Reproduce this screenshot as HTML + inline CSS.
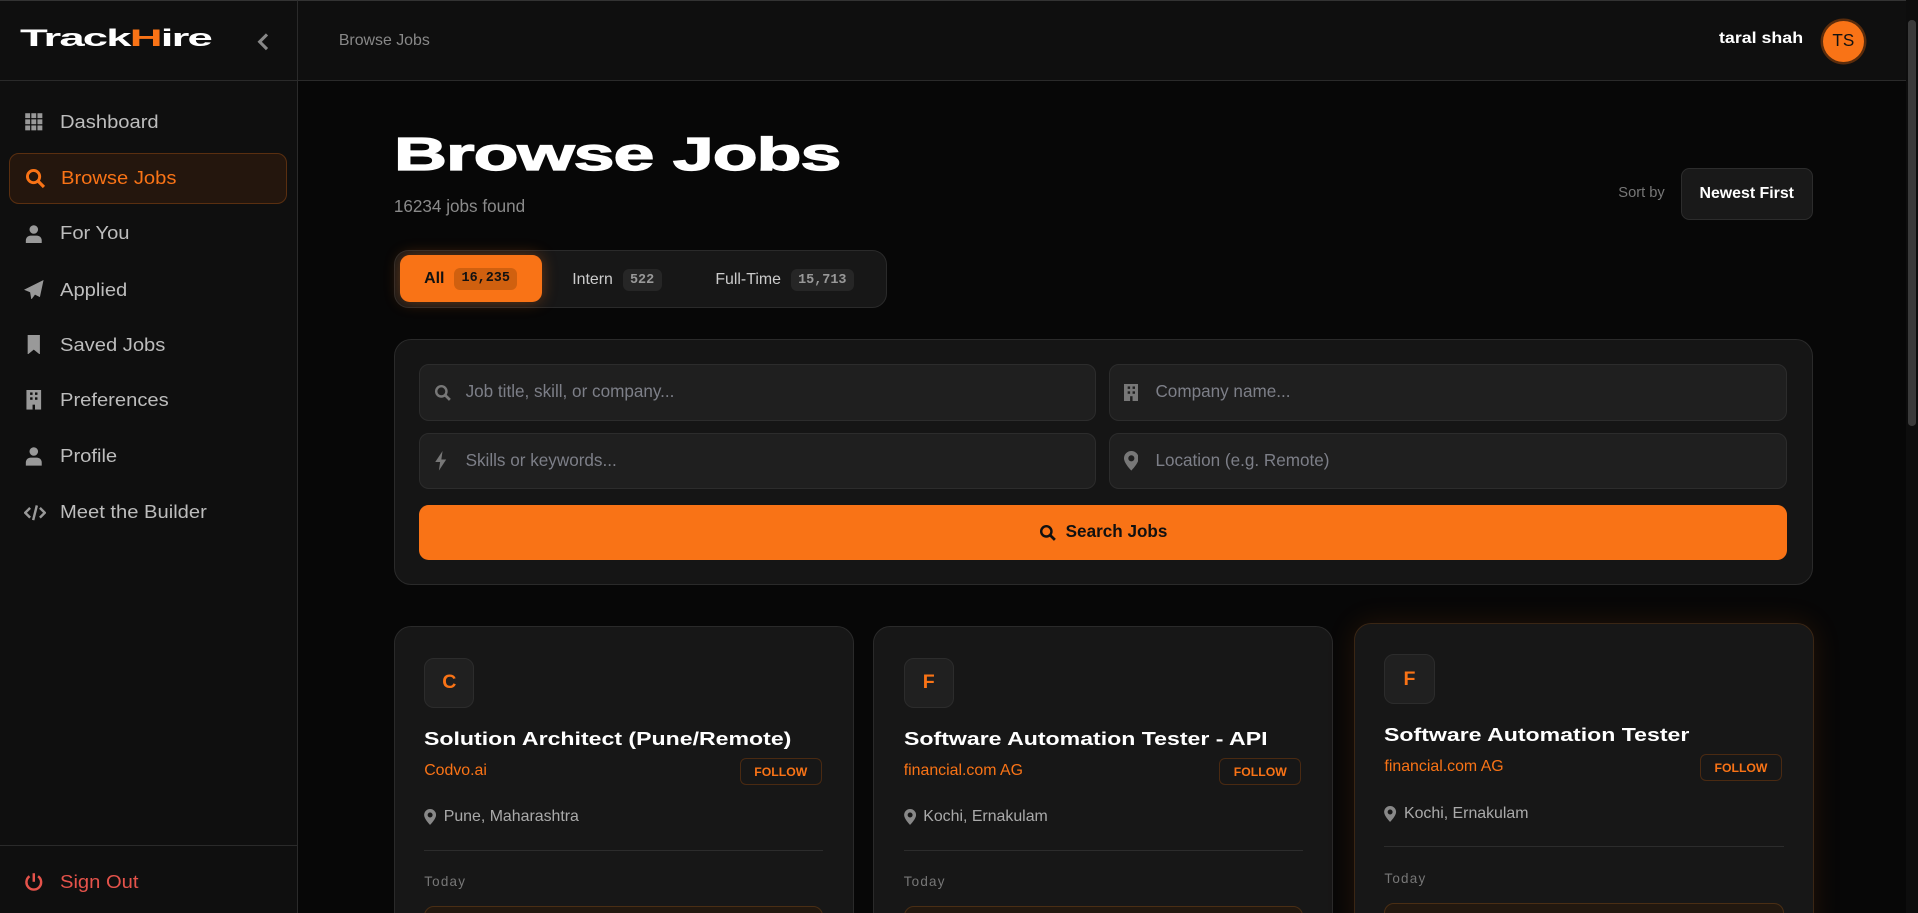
<!DOCTYPE html>
<html><head><meta charset="utf-8">
<style>
*{box-sizing:border-box;margin:0;padding:0}
html,body{width:1918px;height:913px;overflow:hidden;background:#070707}
#w{zoom:1.22321;width:1568px;height:746px;position:relative;font-family:"Liberation Sans",sans-serif;color:#ddd;background:#070707;overflow:hidden}
.abs{position:absolute}
#side{left:0;top:0;width:244px;height:746px;background:#0f0f0f;border-right:1px solid #2a2a2a;border-top:1px solid #333}
#top{left:244px;top:0;width:1314px;height:66px;background:#0f0f0f;border-bottom:1px solid #2a2a2a;border-top:1px solid #333}
.logo{left:16px;top:20px;font-weight:900;font-size:20px;color:#fff;transform:scaleX(1.86);transform-origin:left;letter-spacing:-0.8px}
.nav{position:absolute;left:7px;width:228px;height:42px;display:flex;align-items:center;font-size:15px;color:#bdbdbd}
.nav svg{position:absolute;left:13px}
.nav span{position:absolute;left:42px;transform:scaleX(1.1);transform-origin:left;white-space:nowrap}
.act{background:#24160d;border:1px solid #5a2f10;border-radius:8px;color:#f97316}
.card{position:absolute;width:376px;height:260px;background:#171717;border:1px solid #2a2a2a;border-radius:14px}
.card .lg{position:absolute;left:24px;top:25px;width:41px;height:41px;background:#202020;border:1px solid #2c2c2c;border-radius:8px;color:#f97316;font-size:16px;font-weight:bold;display:flex;align-items:center;justify-content:center}
.card .t{position:absolute;left:24px;top:82px;font-size:15px;font-weight:bold;color:#fff;transform:scaleX(1.26);transform-origin:left;white-space:nowrap}
.card .c{position:absolute;left:24px;top:110px;font-size:13px;color:#f97316}
.card .f{position:absolute;left:282px;top:107px;width:67px;height:22px;border:1px solid #4a2a12;border-radius:5px;color:#f97316;font-size:10px;font-weight:bold;display:flex;align-items:center;justify-content:center}
.card .l{position:absolute;left:24px;top:148px;font-size:13px;color:#aaa;display:flex;align-items:center;gap:6px}
.card .d{position:absolute;left:24px;right:24px;top:182px;border-top:1px solid #2c2c2c}
.card .td{position:absolute;left:24px;top:202px;font-size:11px;color:#777;letter-spacing:1px}
.card .b{position:absolute;left:24px;right:24px;top:228px;height:40px;border:1px solid #4a2e14;border-radius:8px;background:#22180f}
.inp{position:absolute;height:46px;background:#1f1f1f;border:1px solid #2c2c2c;border-radius:8px;font-size:14px;color:#7d7f88;display:flex;align-items:center;padding-left:37px}
.inp svg{position:absolute;left:11px}
.badge{font-family:"Liberation Mono",monospace;font-weight:bold;font-size:11px;padding:3px 6px;border-radius:5px;margin-left:8px}
</style></head><body><div id="w">
<div id="side" class="abs">
 <div style="position:absolute;left:0;top:0;width:243px;height:65px;border-bottom:1px solid #2a2a2a"></div>
 <div class="abs logo">Track<span style="color:#f97316">H</span>ire</div>
 <svg class="abs" style="left:209px;top:25px" width="12" height="16" viewBox="0 0 12 16"><path d="M9 2L3 8l6 6" stroke="#888" stroke-width="2.5" fill="none"/></svg>
 <div class="nav" style="top:78px"><svg width="16" height="16" viewBox="0 0 16 16" fill="#999"><rect x="1" y="1" width="4" height="4"/><rect x="6" y="1" width="4" height="4"/><rect x="11" y="1" width="4" height="4"/><rect x="1" y="6" width="4" height="4"/><rect x="6" y="6" width="4" height="4"/><rect x="11" y="6" width="4" height="4"/><rect x="1" y="11" width="4" height="4"/><rect x="6" y="11" width="4" height="4"/><rect x="11" y="11" width="4" height="4"/></svg><span>Dashboard</span></div>
 <div class="nav act" style="top:124px"><svg width="17" height="17" viewBox="0 0 17 17"><circle cx="7" cy="7" r="5" stroke="#f97316" stroke-width="2.4" fill="none"/><path d="M10.5 10.5l5 5" stroke="#f97316" stroke-width="2.6"/></svg><span>Browse Jobs</span></div>
 <div class="nav" style="top:169px"><svg width="16" height="16" viewBox="0 0 16 16" fill="#999"><circle cx="8" cy="4.5" r="3.5"/><path d="M1.5 16v-2.5c0-2.5 2-4 4-4h5c2 0 4 1.5 4 4V16z"/></svg><span>For You</span></div>
 <div class="nav" style="top:215px"><svg width="16" height="16" viewBox="0 0 16 16" fill="#999"><path d="M16 0L0 8l5 2 1 6 3-4 4 2z"/></svg><span>Applied</span></div>
 <div class="nav" style="top:260px"><svg width="16" height="16" viewBox="0 0 16 16" fill="#999"><path d="M3 0h10v16l-5-4-5 4z"/></svg><span>Saved Jobs</span></div>
 <div class="nav" style="top:305px"><svg width="16" height="16" viewBox="0 0 16 16"><rect x="2" y="0" width="12" height="16" fill="#999"/><g fill="#0f0f0f"><rect x="5" y="2" width="2" height="2"/><rect x="9" y="2" width="2" height="2"/><rect x="5" y="6" width="2" height="2"/><rect x="9" y="6" width="2" height="2"/><rect x="7" y="12" width="2" height="4"/></g></svg><span>Preferences</span></div>
 <div class="nav" style="top:351px"><svg width="16" height="16" viewBox="0 0 16 16" fill="#999"><circle cx="8" cy="4.5" r="3.5"/><path d="M1.5 16v-2.5c0-2.5 2-4 4-4h5c2 0 4 1.5 4 4V16z"/></svg><span>Profile</span></div>
 <div class="nav" style="top:397px"><svg width="18" height="16" viewBox="0 0 18 16"><path d="M5 4L1 8l4 4M13 4l4 4-4 4M10.5 2l-3 12" stroke="#999" stroke-width="2" fill="none"/></svg><span>Meet the Builder</span></div>
 <div style="position:absolute;left:0;top:690px;width:243px;border-top:1px solid #2a2a2a"></div>
 <div class="nav" style="top:699px;color:#e5534b"><svg width="16" height="16" viewBox="0 0 16 16"><path d="M4.5 3.5a6 6 0 1 0 7 0" stroke="#e5534b" stroke-width="2" fill="none"/><path d="M8 1v7" stroke="#e5534b" stroke-width="2"/></svg><span>Sign Out</span></div>
</div>
<div id="top" class="abs">
 <div class="abs" style="left:33px;top:25px;font-size:13px;color:#888">Browse Jobs</div>
 <div class="abs" style="left:1161px;top:24px;font-size:13px;font-weight:bold;color:#fff;transform:scaleX(1.12);transform-origin:left">taral shah</div>
 <div class="abs" style="left:1246px;top:16px;width:34px;height:34px;border-radius:50%;background:#f97316;box-shadow:0 0 0 2px #5a2c0c;color:#111;font-size:14px;display:flex;align-items:center;justify-content:center">TS</div>
</div>
<div class="abs" style="left:1558px;top:0;width:10px;height:746px;background:#0d0d0d"><div style="margin:16px 0 0 2px;width:6px;height:332px;background:#3a3a3a;border-radius:3px"></div></div>

<div class="abs" style="left:322px;top:104px;font-size:38px;font-weight:900;color:#fff;transform:scaleX(1.58);transform-origin:left;letter-spacing:-0.5px;-webkit-text-stroke:1px #fff">Browse Jobs</div>
<div class="abs" style="left:322px;top:161px;font-size:14px;color:#8a8a8a">16234 jobs found</div>
<div class="abs" style="left:1323px;top:151px;font-size:12px;color:#777">Sort by</div>
<div class="abs" style="left:1374px;top:137px;width:108px;height:43px;background:#191919;border:1px solid #2c2c2c;border-radius:7px;font-size:13px;font-weight:bold;color:#fff;display:flex;align-items:center;justify-content:center">Newest First</div>

<div class="abs" style="left:322px;top:204px;width:403px;height:48px;background:#171717;border:1px solid #2a2a2a;border-radius:12px">
 <div class="abs" style="left:4px;top:4px;width:116px;height:38px;background:#f97316;border-radius:8px;box-shadow:0 0 12px rgba(249,115,22,.35);display:flex;align-items:center;justify-content:center;font-size:13px;font-weight:bold;color:#111">All<span class="badge" style="background:#d0600f;color:#111">16,235</span></div>
 <div class="abs" style="left:145px;top:15px;font-size:13px;color:#ccc;display:flex;align-items:center">Intern<span class="badge" style="background:#262626;color:#999">522</span></div>
 <div class="abs" style="left:262px;top:15px;font-size:13px;color:#ccc;display:flex;align-items:center">Full-Time<span class="badge" style="background:#262626;color:#999">15,713</span></div>
</div>

<div class="abs" style="left:322px;top:277px;width:1160px;height:201px;background:#151515;border:1px solid #2a2a2a;border-radius:14px">
 <div class="inp" style="left:20px;top:20px;width:553px"><svg width="14" height="14" viewBox="0 0 14 14"><circle cx="6" cy="6" r="4.2" stroke="#777" stroke-width="2" fill="none"/><path d="M9 9l4 4" stroke="#777" stroke-width="2.2"/></svg>Job title, skill, or company...</div>
 <div class="inp" style="left:584px;top:20px;width:554px"><svg width="12" height="14" viewBox="0 0 12 14"><rect x="0" y="0" width="12" height="14" fill="#777"/><g fill="#1f1f1f"><rect x="3" y="2" width="2" height="2"/><rect x="7" y="2" width="2" height="2"/><rect x="3" y="6" width="2" height="2"/><rect x="7" y="6" width="2" height="2"/><rect x="5" y="10" width="2" height="4"/></g></svg>Company name...</div>
 <div class="inp" style="left:20px;top:76px;width:553px"><svg width="12" height="16" viewBox="0 0 12 16"><path d="M7 0L1 9h4l-1 7 6-9H6z" fill="#777"/></svg>Skills or keywords...</div>
 <div class="inp" style="left:584px;top:76px;width:554px"><svg width="12" height="16" viewBox="0 0 12 16"><path d="M6 0a6 6 0 0 0-6 6c0 4 6 10 6 10s6-6 6-10a6 6 0 0 0-6-6zm0 8.5a2.5 2.5 0 1 1 0-5 2.5 2.5 0 0 1 0 5z" fill="#777"/></svg>Location (e.g. Remote)</div>
 <div class="abs" style="left:20px;top:135px;width:1118px;height:45px;background:#f97316;border-radius:8px;display:flex;align-items:center;justify-content:center;font-size:14px;font-weight:bold;color:#111;gap:8px"><svg width="14" height="14" viewBox="0 0 14 14"><circle cx="6" cy="6" r="4.2" stroke="#111" stroke-width="2" fill="none"/><path d="M9 9l4 4" stroke="#111" stroke-width="2.2"/></svg>Search Jobs</div>
</div>

<div class="card" style="left:322px;top:512px"><div class="lg">C</div><div class="t">Solution Architect (Pune/Remote)</div><div class="c">Codvo.ai</div><div class="f">FOLLOW</div><div class="l"><svg width="10" height="13" viewBox="0 0 12 16"><path d="M6 0a6 6 0 0 0-6 6c0 4 6 10 6 10s6-6 6-10a6 6 0 0 0-6-6zm0 8.5a2.5 2.5 0 1 1 0-5 2.5 2.5 0 0 1 0 5z" fill="#888"/></svg>Pune, Maharashtra</div><div class="d"></div><div class="td">Today</div><div class="b"></div></div>
<div class="card" style="left:714px;top:512px"><div class="lg">F</div><div class="t">Software Automation Tester - API</div><div class="c">financial.com AG</div><div class="f">FOLLOW</div><div class="l"><svg width="10" height="13" viewBox="0 0 12 16"><path d="M6 0a6 6 0 0 0-6 6c0 4 6 10 6 10s6-6 6-10a6 6 0 0 0-6-6zm0 8.5a2.5 2.5 0 1 1 0-5 2.5 2.5 0 0 1 0 5z" fill="#888"/></svg>Kochi, Ernakulam</div><div class="d"></div><div class="td">Today</div><div class="b"></div></div>
<div class="card" style="left:1107px;top:509px;border-color:#3a2614;box-shadow:0 0 24px rgba(249,115,22,.12)"><div class="lg">F</div><div class="t">Software Automation Tester</div><div class="c">financial.com AG</div><div class="f">FOLLOW</div><div class="l"><svg width="10" height="13" viewBox="0 0 12 16"><path d="M6 0a6 6 0 0 0-6 6c0 4 6 10 6 10s6-6 6-10a6 6 0 0 0-6-6zm0 8.5a2.5 2.5 0 1 1 0-5 2.5 2.5 0 0 1 0 5z" fill="#888"/></svg>Kochi, Ernakulam</div><div class="d"></div><div class="td">Today</div><div class="b"></div></div>
</div></body></html>
